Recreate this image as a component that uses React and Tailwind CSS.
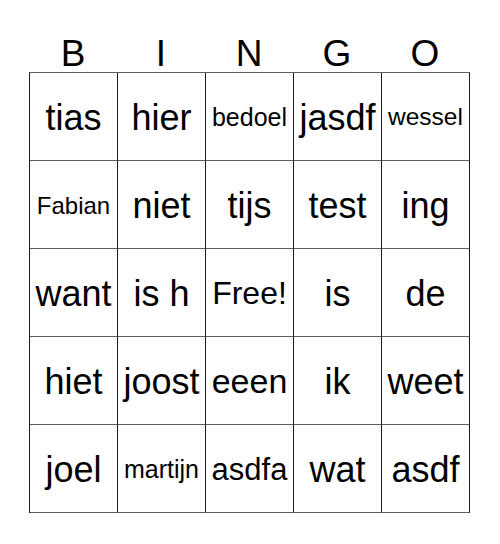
import React from 'react';

const letters = ['B', 'I', 'N', 'G', 'O'];

// [word, font size in px]
const rows = [
    [['tias', 36], ['hier', 36], ['bedoel', 25], ['jasdf', 36], ['wessel', 24.5]],
    [['Fabian', 24], ['niet', 36], ['tijs', 36], ['test', 36], ['ing', 36]],
    [['want', 36], ['is h', 36], ['Free!', 32], ['is', 36], ['de', 36]],
    [['hiet', 36], ['joost', 36], ['eeen', 34], ['ik', 36], ['weet', 36]],
    [['joel', 36], ['martijn', 25], ['asdfa', 31], ['wat', 36], ['asdf', 36]],
];

export default function App() {
    return (
        <main className="h-[544px] w-[500px] bg-white font-['Liberation_Sans',Arial,sans-serif] text-black">
            <div className="ml-[29px] w-[441px]">
                <div className="flex h-[72px] items-end">
                    {letters.map((l) => (
                        <div key={l} className="w-[88px] text-center text-[37px] leading-none">
                            {l}
                        </div>
                    ))}
                </div>
                <div className="grid grid-cols-[repeat(5,88px)] border-l border-t border-l-[#1a1a1a] border-t-[#5e5e5e]">
                    {rows.flat().map(([word, size], i) => (
                        <div
                            key={i}
                            className="flex h-[88px] items-center justify-center whitespace-nowrap border-b border-r border-b-[#5e5e5e] border-r-[#1a1a1a] pt-[2px] leading-[1.15]"
                            style={{ fontSize: `${size}px` }}
                        >
                            {word}
                        </div>
                    ))}
                </div>
            </div>
        </main>
    );
}
